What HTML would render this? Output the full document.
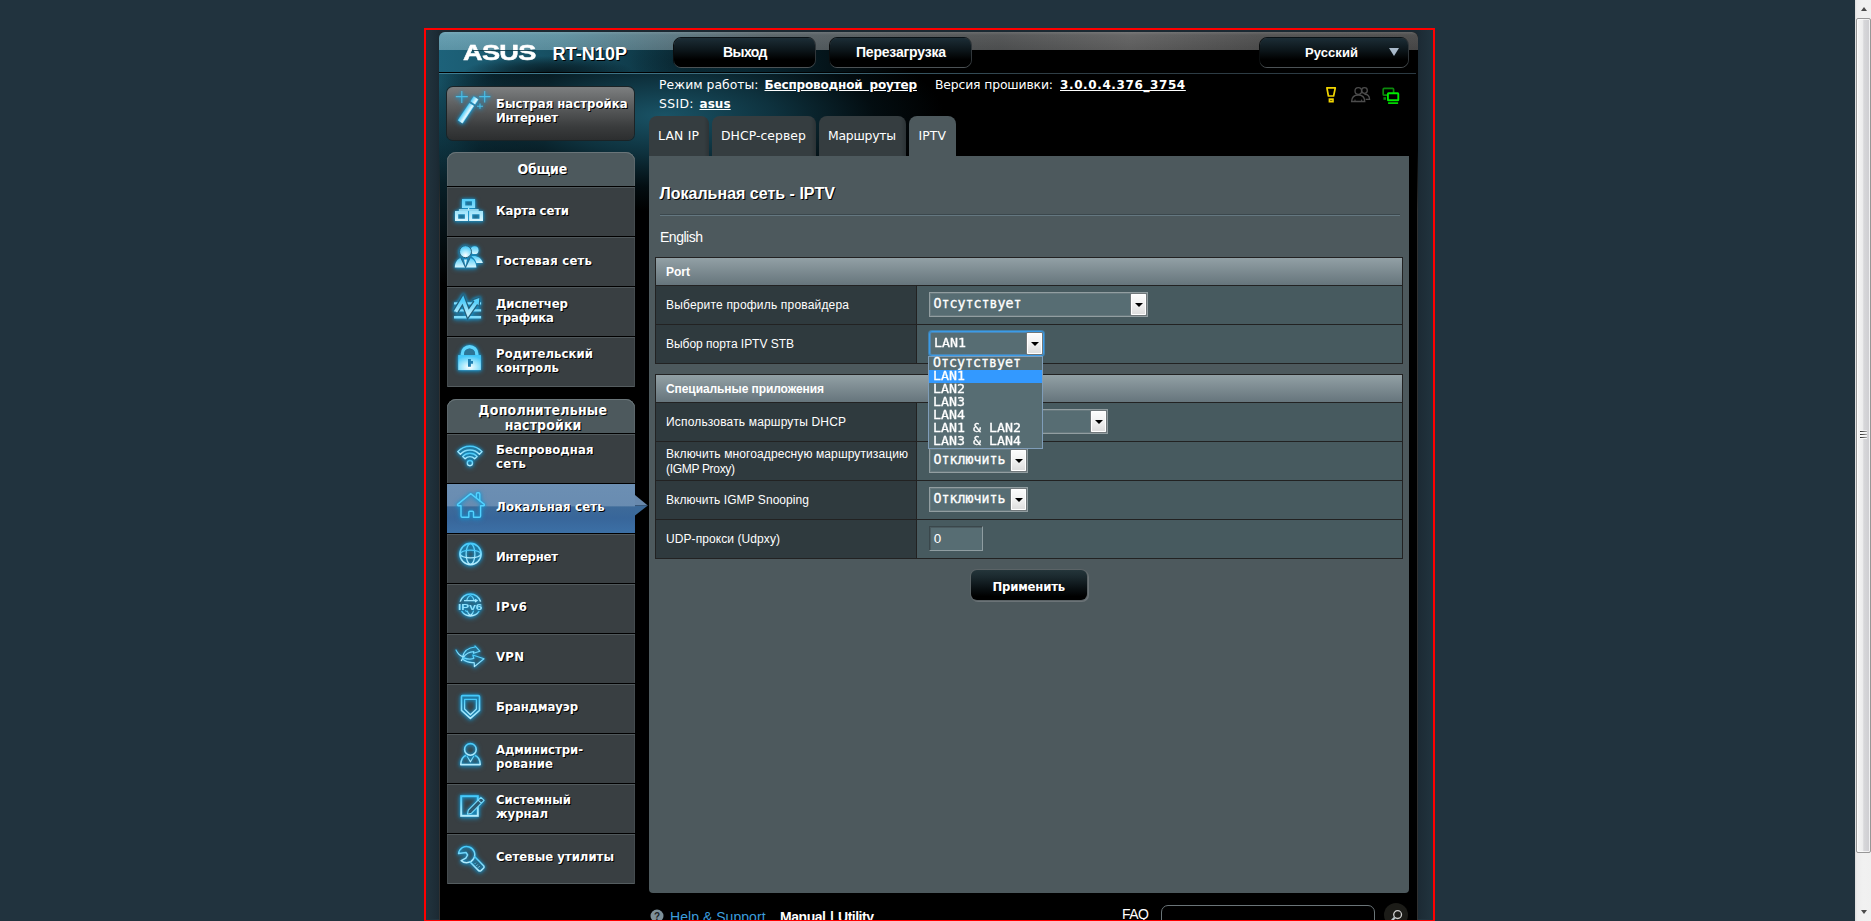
<!DOCTYPE html>
<html lang="ru">
<head>
<meta charset="utf-8">
<title>ASUS Wireless Router RT-N10P - IPTV</title>
<style>
html,body{margin:0;padding:0;}
body{width:1871px;height:921px;overflow:hidden;position:relative;background:#21333e;font-family:"Liberation Sans",sans-serif;color:#fff;}
.a{position:absolute;}
.t{position:absolute;white-space:pre;line-height:1;color:#fff;}
.sh{text-shadow:1px 1px 0 #000;}
u,.u{text-decoration:underline;}
/* outer */
#redbox{z-index:5;left:424px;top:28px;width:1007px;height:890px;border:2px solid #f00;}
#shadow{left:426px;top:30px;width:1007px;height:889px;background:linear-gradient(90deg,#21333e 0,#1f303a 5px,#1d2c36 10px,#1b2932 13px,#1b2932 991px,#1d2c36 995px,#1f303a 1001px,#21333e 1007px);}
#panel{left:439px;top:32px;width:979px;height:889px;background:#000;border-radius:6px 6px 0 0;overflow:hidden;}
#bg0{left:0;top:0;width:979px;height:40px;background:radial-gradient(ellipse 85px 16px at 110px 40px,rgba(2,10,14,.75) 0,rgba(2,10,14,.45) 50%,rgba(0,0,0,0) 100%),radial-gradient(ellipse 60px 30px at 250px 30px,rgba(2,10,14,.35) 0,rgba(0,0,0,0) 100%),linear-gradient(90deg,#1d627a 0,#185468 90px,#0f3b4a 200px,#07222c 330px,#000 470px);}
#bg1{left:0;top:42px;width:979px;height:260px;background:
 radial-gradient(ellipse 280px 95px at 225px 42px,rgba(27,88,108,.95) 0,rgba(19,68,85,.72) 40%,rgba(9,40,52,.32) 75%,rgba(0,0,0,0) 100%),
 radial-gradient(ellipse 110px 200px at 0px 10px,rgba(26,92,113,.95) 0,rgba(14,52,66,.6) 50%,rgba(0,0,0,0) 100%),
 #000;}
#topband{left:0;top:0;width:979px;height:18px;background:linear-gradient(90deg,rgba(112,168,186,.8) 0,rgba(110,160,175,.8) 120px,rgba(104,132,142,.82) 230px,rgba(98,106,110,.85) 330px,rgba(92,94,95,.85) 560px,rgba(112,112,112,.85) 690px,rgba(90,90,90,.85) 820px,rgba(84,84,84,.85) 100%);}
#hline{left:0;top:40px;width:977px;height:1px;background:#000;}
#hline2{left:0;top:41px;width:977px;height:1px;background:linear-gradient(90deg,#3f7d92 0,#3a6474 400px,#2f3e46 600px,#2b3a43 100%);}
.hbtn{height:29px;border-radius:7px;background:linear-gradient(180deg,#1c2d36 0,#0b1418 45%,#000 75%);box-shadow:0 1px 0 #4c5255,1px 0 0 #30363a,-1px 0 0 #0a0d0e,0 -1px 0 #0a1216;}
/* menu */
#quick{left:447px;top:87px;width:187px;height:53px;border-radius:6px;background:linear-gradient(180deg,#7d7f80 0,#5c5e5f 35%,#3a3c3d 75%,#2c2e2f 100%);box-shadow:0 0 0 1px #1b2326;}
.mhead{left:447px;width:188px;background:#4d595d;border-radius:9px 9px 0 0;box-shadow:inset 0 1px 0 #6a7579,inset 1px 0 0 #5c676b,inset -1px 0 0 #5c676b;}
.mi{left:447px;width:188px;height:49px;background:#393f42;border-top:1px solid #000;box-shadow:inset 0 1px 0 #50585b,inset 1px 0 0 #454c4f,inset -1px 0 0 #454c4f;}
.mi.cur{background:linear-gradient(180deg,#6c8fb3 0,#698cb1 44%,#3d6a99 47%,#38669a 70%,#3c70a6 100%);box-shadow:none;}
.mlast{box-shadow:inset 0 1px 0 #50585b,inset 1px 0 0 #454c4f,inset -1px 0 0 #454c4f,inset 0 -1px 0 #555d60;}
.ico{position:absolute;filter:drop-shadow(0 0 1.5px #1397d1) drop-shadow(0 1px 2px rgba(20,150,210,.8));}
/* tabs */
.tab{top:116px;height:40px;border-radius:8px 8px 0 0;background:linear-gradient(90deg,#353d40 0,#353d40 calc(100% - 5px),#2c3336 100%);}
.tab.on{background:#4d595d;}
#content{left:649px;top:156px;width:760px;height:737px;background:#4d595d;border-radius:0 0 4px 4px;}
/* tables */
.thd{left:655px;width:746px;height:27px;border:1px solid #222;background:linear-gradient(180deg,#92a0a5 0,#66757c 100%);}
.row{left:655px;width:746px;height:38px;border:1px solid #222;border-top:none;background:#475a5f;}
.row i{position:absolute;left:0;top:0;width:260px;height:38px;background:#2f3a3e;border-right:1px solid #222;}
.sel{height:23px;border:1px solid #929ea1;background:#576d73;box-shadow:inset 0 0 0 1px #67797e;}
.sel b{position:absolute;right:1px;top:1px;width:15px;height:21px;background:linear-gradient(180deg,#fdfdfd 0,#f1f1f1 50%,#dcdcdc 100%);border-radius:1px;box-shadow:inset 0 0 0 1px #fff,0 0 0 1px #70777a;}
.sel b:after{content:"";position:absolute;left:4px;top:9px;border:4px solid transparent;border-top:4px solid #000;border-bottom:none;}
.sel.focus{border-color:#3a9be8;border-radius:3px;box-shadow:0 0 0 1px rgba(60,160,235,.55),inset 0 0 0 1px #4e86b0;}
#list{left:928px;top:356px;width:113px;height:91px;border:1px solid #7f9db9;background:#576d73;}
#list div{height:13px;position:relative;}
#list .hi{background:#3399ff;}
#inp{left:929px;top:526px;width:52px;height:23px;background:#576d73;border:1px solid;border-color:#3a474b #8f9da1 #8f9da1 #3a474b;box-shadow:inset 1px 1px 0 #4a5a5f;}
#apply{left:971px;top:570px;width:116px;height:30px;border-radius:6px;background:linear-gradient(180deg,#24353a 0,#1a282d 25%,#0a1114 60%,#000 88%);box-shadow:0 0 0 1px #5b6366,1px 1px 0 1px #6b7377;}
/* scrollbar */
#sb{left:1855px;top:0;width:16px;height:921px;background:linear-gradient(90deg,#dcdcdc 0,#ececec 2px,#f1f1f1 50%,#f0f0f0 100%);}
#sbthumb{left:1px;top:18px;width:13px;height:833px;border:1px solid #979797;border-radius:2px;background:linear-gradient(90deg,#f6f6f6 0,#ececed 45%,#d7d7da 52%,#cdcdd1 100%);box-shadow:inset 0 0 0 1px rgba(255,255,255,.7);}
.tri-up{left:6px;top:7px;border:3.5px solid transparent;border-bottom:4px solid #4a4a4a;border-top:none;}
.tri-dn{left:6px;top:910px;border:3.5px solid transparent;border-top:4px solid #4a4a4a;border-bottom:none;}
.cap{display:inline-block;transform:scaleY(.87);transform-origin:0 84.6%;}
.mo{-webkit-text-stroke:.3px #fff;}
#pline{left:439px;top:150px;width:979px;height:771px;box-sizing:border-box;border-left:1px solid #303030;border-right:1px solid #303030;-webkit-mask-image:linear-gradient(180deg,transparent 0,#000 60px);mask-image:linear-gradient(180deg,transparent 0,#000 60px);}
#topband:after{content:"";position:absolute;left:0;top:0;width:100%;height:18px;background:linear-gradient(180deg,rgba(255,255,255,.16) 0,rgba(255,255,255,.05) 3px,rgba(0,0,0,.04) 100%);}

</style>
</head>
<body>
<div id="redbox" class="a"></div>
<div id="shadow" class="a"></div>
<div id="panel" class="a"><div id="bg0" class="a"></div><div id="bg1" class="a"></div><div id="topband" class="a"></div><div id="hline" class="a"></div><div id="hline2" class="a"></div></div>
<div id="pline" class="a"></div><span class="t" id="logo" style='left:463.2px;top:42.3px;font-family:"Liberation Sans",sans-serif;font-weight:bold;font-size:22px;letter-spacing:-.6px;transform:scaleX(1.235);transform-origin:0 0;-webkit-text-stroke:.5px #fff;'>ASUS</span><div class="a" style="left:472px;top:49.6px;width:64px;height:.9px;background:rgba(16,62,78,.85)"></div>
<span class="t" id="t0" style='left:552.5px;top:44.76px;font-family:"Liberation Sans",sans-serif;font-weight:bold;font-size:18px;letter-spacing:0.078px;text-shadow:1px 1px 0 #000;'>RT-N10P</span><div class="a hbtn" style="left:674px;top:38px;width:141px"></div><div class="a hbtn" style="left:830px;top:38px;width:141px"></div><div class="a hbtn" style="left:1260px;top:38px;width:148px"></div>
<span class="t" id="t1" style='left:723px;top:44.95px;font-family:"Liberation Sans",sans-serif;font-weight:bold;font-size:14px;letter-spacing:-0.566px;'>Выход</span><span class="t" id="t2" style='left:856px;top:44.95px;font-family:"Liberation Sans",sans-serif;font-weight:bold;font-size:14px;letter-spacing:-0.210px;'>Перезагрузка</span><span class="t" id="t3" style='left:1305px;top:46.20px;font-family:"Liberation Sans",sans-serif;font-weight:bold;font-size:13px;letter-spacing:0.078px;'>Русский</span><div class="a" style="left:1389px;top:48px;border:5.5px solid transparent;border-top:8px solid #a9bacb;border-bottom:none;"></div>
<span class="t" id="t4" style='left:659px;top:78.51px;font-family:"DejaVu Sans",sans-serif;font-weight:normal;font-size:12.4px;letter-spacing:0.004px;'>Режим работы:</span><span class="t" id="t5" style='left:764.5px;top:78.85px;font-family:"DejaVu Sans",sans-serif;font-weight:bold;font-size:12px;letter-spacing:-0.161px;word-spacing:3px;'><u>Беспроводной роутер</u></span><span class="t" id="t6" style='left:935px;top:78.51px;font-family:"DejaVu Sans",sans-serif;font-weight:normal;font-size:12.4px;letter-spacing:-0.147px;'>Версия прошивки:</span><span class="t" id="t7" style='left:1060px;top:78.85px;font-family:"DejaVu Sans",sans-serif;font-weight:bold;font-size:12px;letter-spacing:0.609px;'><u>3.0.0.4.376_3754</u></span><span class="t" id="t8" style='left:659px;top:97.51px;font-family:"DejaVu Sans",sans-serif;font-weight:normal;font-size:12.4px;letter-spacing:0.348px;'>SSID:</span><span class="t" id="t9" style='left:699.5px;top:97.85px;font-family:"DejaVu Sans",sans-serif;font-weight:bold;font-size:12px;letter-spacing:0.056px;'><u>asus</u></span>
<svg class="a" style="left:1316px;top:80px" width="96" height="32" viewBox="0 0 96 32"><path d="M10.9 7.9H19.3L17.6 16H12.4Z" fill="none" stroke="#f2d500" stroke-width="1.7" stroke-linejoin="round"/><rect x="12.6" y="18.3" width="5.2" height="4.2" fill="#f2d500"/><rect x="14.1" y="20" width="2.2" height=".8" fill="#5a4d00"/><g fill="none" stroke="#4c4c4c" stroke-width="1.3"><circle cx="48.5" cy="10.5" r="2.8"/><path d="M48.4 14.3C51.6 14 53.5 16 53.6 19.4H49.6"/><circle cx="42.3" cy="11" r="3.3" fill="#000"/><path d="M35.6 21.5C35.8 17 38.5 15 42.3 15C46.1 15 48.6 17 48.8 21.5Z" fill="#000"/><path d="M39 21.5V19.6M45.6 21.5V19.6" stroke-width="1"/></g><rect x="67.2" y="8.4" width="10.4" height="6.8" rx="1" fill="none" stroke="#0b8a0b" stroke-width="1.7"/><rect x="67.4" y="17.2" width="2.6" height="2.6" fill="#0b8a0b"/><rect x="71.9" y="13.3" width="10.4" height="7" rx=".6" fill="#000" stroke="#00ec00" stroke-width="1.9"/><rect x="72.1" y="22.3" width="10" height="1.6" fill="#00ec00"/></svg>
<div id="quick" class="a"></div><span class="t" id="t10" style='left:496px;top:97.00px;font-family:"DejaVu Sans Condensed","DejaVu Sans",sans-serif;font-weight:bold;font-size:13px;letter-spacing:0.028px;text-shadow:1px 1px 0 #000;'>Быстрая настройка</span><span class="t" id="t11" style='left:496px;top:111.00px;font-family:"DejaVu Sans Condensed","DejaVu Sans",sans-serif;font-weight:bold;font-size:13px;letter-spacing:-0.250px;text-shadow:1px 1px 0 #000;'>Интернет</span>
<div class="a mhead" style="top:152px;height:34px"></div><span class="t" id="t12" style='left:517.5px;top:161.96px;font-family:"DejaVu Sans Condensed","DejaVu Sans",sans-serif;font-weight:bold;font-size:14px;letter-spacing:-0.278px;text-shadow:1px 1px 0 #000;'>Общие</span><div class="a mi" style="top:186px;"></div><div class="a mi" style="top:236px;"></div><div class="a mi" style="top:286px;"></div><div class="a mi mlast" style="top:336px;height:50px;"></div><span class="t" id="t13" style='left:496px;top:204.00px;font-family:"DejaVu Sans Condensed","DejaVu Sans",sans-serif;font-weight:bold;font-size:13px;letter-spacing:-0.156px;text-shadow:1px 1px 0 #000;'>Карта сети</span><span class="t" id="t14" style='left:496px;top:254.00px;font-family:"DejaVu Sans Condensed","DejaVu Sans",sans-serif;font-weight:bold;font-size:13px;letter-spacing:0.246px;text-shadow:1px 1px 0 #000;'>Гостевая сеть</span><span class="t" id="t15" style='left:496px;top:297.00px;font-family:"DejaVu Sans Condensed","DejaVu Sans",sans-serif;font-weight:bold;font-size:13px;letter-spacing:-0.086px;text-shadow:1px 1px 0 #000;'>Диспетчер</span><span class="t" id="t16" style='left:496px;top:311.00px;font-family:"DejaVu Sans Condensed","DejaVu Sans",sans-serif;font-weight:bold;font-size:13px;letter-spacing:-0.112px;text-shadow:1px 1px 0 #000;'>трафика</span><span class="t" id="t17" style='left:496px;top:347.00px;font-family:"DejaVu Sans Condensed","DejaVu Sans",sans-serif;font-weight:bold;font-size:13px;letter-spacing:0.074px;text-shadow:1px 1px 0 #000;'>Родительский</span><span class="t" id="t18" style='left:496px;top:361.00px;font-family:"DejaVu Sans Condensed","DejaVu Sans",sans-serif;font-weight:bold;font-size:13px;letter-spacing:-0.031px;text-shadow:1px 1px 0 #000;'>контроль</span>
<div class="a mhead" style="top:399px;height:34px"></div><span class="t" id="t19" style='left:478.3px;top:402.66px;font-family:"DejaVu Sans Condensed","DejaVu Sans",sans-serif;font-weight:bold;font-size:14px;letter-spacing:0.233px;text-shadow:1px 1px 0 #000;'>Дополнительные</span><span class="t" id="t20" style='left:504.7px;top:417.86px;font-family:"DejaVu Sans Condensed","DejaVu Sans",sans-serif;font-weight:bold;font-size:14px;letter-spacing:0.107px;text-shadow:1px 1px 0 #000;'>настройки</span><div class="a mi" style="top:433px;"></div><div class="a mi cur" style="top:483px;"></div><div class="a mi" style="top:533px;"></div><div class="a mi" style="top:583px;"></div><div class="a mi" style="top:633px;"></div><div class="a mi" style="top:683px;"></div><div class="a mi" style="top:733px;"></div><div class="a mi" style="top:783px;"></div><div class="a mi mlast" style="top:833px;height:50px;"></div><svg class="a" style="left:635px;top:495px" width="14" height="21" viewBox="0 0 14 21"><path d="M0 0L12.8 10.5H0Z" fill="#6889ad"/><path d="M0 10.5H12.8L0 20.5Z" fill="#3c6a99"/></svg><span class="t" id="t21" style='left:496px;top:443.00px;font-family:"DejaVu Sans Condensed","DejaVu Sans",sans-serif;font-weight:bold;font-size:13px;letter-spacing:0.069px;text-shadow:1px 1px 0 #000;'>Беспроводная</span><span class="t" id="t22" style='left:496px;top:457.00px;font-family:"DejaVu Sans Condensed","DejaVu Sans",sans-serif;font-weight:bold;font-size:13px;letter-spacing:0.318px;text-shadow:1px 1px 0 #000;'>сеть</span><span class="t" id="t23" style='left:496px;top:500.00px;font-family:"DejaVu Sans Condensed","DejaVu Sans",sans-serif;font-weight:bold;font-size:13px;letter-spacing:0.197px;text-shadow:1px 1px 0 #000;'>Локальная сеть</span><span class="t" id="t24" style='left:496px;top:550.00px;font-family:"DejaVu Sans Condensed","DejaVu Sans",sans-serif;font-weight:bold;font-size:13px;letter-spacing:-0.250px;text-shadow:1px 1px 0 #000;'>Интернет</span><span class="t" id="t25" style='left:496px;top:600.00px;font-family:"DejaVu Sans Condensed","DejaVu Sans",sans-serif;font-weight:bold;font-size:13px;letter-spacing:0.771px;text-shadow:1px 1px 0 #000;'>IPv6</span><span class="t" id="t26" style='left:496px;top:650.00px;font-family:"DejaVu Sans Condensed","DejaVu Sans",sans-serif;font-weight:bold;font-size:13px;letter-spacing:0.289px;text-shadow:1px 1px 0 #000;'>VPN</span><span class="t" id="t27" style='left:496px;top:700.00px;font-family:"DejaVu Sans Condensed","DejaVu Sans",sans-serif;font-weight:bold;font-size:13px;letter-spacing:-0.120px;text-shadow:1px 1px 0 #000;'>Брандмауэр</span><span class="t" id="t28" style='left:496px;top:743.00px;font-family:"DejaVu Sans Condensed","DejaVu Sans",sans-serif;font-weight:bold;font-size:13px;letter-spacing:-0.067px;text-shadow:1px 1px 0 #000;'>Администри-</span><span class="t" id="t29" style='left:496px;top:757.00px;font-family:"DejaVu Sans Condensed","DejaVu Sans",sans-serif;font-weight:bold;font-size:13px;letter-spacing:0.180px;text-shadow:1px 1px 0 #000;'>рование</span><span class="t" id="t30" style='left:496px;top:793.00px;font-family:"DejaVu Sans Condensed","DejaVu Sans",sans-serif;font-weight:bold;font-size:13px;letter-spacing:0.020px;text-shadow:1px 1px 0 #000;'>Системный</span><span class="t" id="t31" style='left:496px;top:807.00px;font-family:"DejaVu Sans Condensed","DejaVu Sans",sans-serif;font-weight:bold;font-size:13px;letter-spacing:-0.037px;text-shadow:1px 1px 0 #000;'>журнал</span><span class="t" id="t32" style='left:496px;top:850.00px;font-family:"DejaVu Sans Condensed","DejaVu Sans",sans-serif;font-weight:bold;font-size:13px;letter-spacing:0.004px;text-shadow:1px 1px 0 #000;'>Сетевые утилиты</span>
<svg class="a" style="left:0;top:0" width="0" height="0"><defs><linearGradient id="gf" x1="0" y1="0" x2="0" y2="1"><stop offset="0" stop-color="#52cdf9"/><stop offset="1" stop-color="#d9f6fe"/></linearGradient><linearGradient id="gs" x1="0" y1="0" x2="0" y2="1"><stop offset="0" stop-color="#45c9fa"/><stop offset="1" stop-color="#b5ecfd"/></linearGradient><linearGradient id="gw" x1="0" y1="0" x2="1" y2="0"><stop offset="0" stop-color="#4ccbf8"/><stop offset=".75" stop-color="#e4f8fe"/><stop offset="1" stop-color="#8adffb"/></linearGradient><radialGradient id="gh" cx=".5" cy=".8" r=".75"><stop offset="0" stop-color="#fff"/><stop offset=".45" stop-color="#a9e9fd"/><stop offset="1" stop-color="#45c8f9"/></radialGradient></defs></svg><svg class="ico" style="left:448px;top:88px" width="48" height="48" viewBox="0 0 48 48"><g stroke="#4fc9f3" stroke-width="1.1" opacity=".85"><path d="M7.8 8.6H19.8M13.8 3.1V14.9M31.2 8.6H42.4M36.7 3.1V14.4"/><path d="M29 18.3H35M32 15.6V20.8" stroke-width="1.1"/></g><g transform="translate(28.1 9.9) rotate(33.5)"><rect x="-2.9" y="0" width="5.8" height="6" fill="url(#gw)"/><rect x="-2.9" y="7.9" width="5.8" height="20.9" fill="url(#gw)"/></g></svg><svg class="ico" style="left:448px;top:190px" width="48" height="48" viewBox="0 0 48 48"><path fill="url(#gf)" fill-rule="evenodd" d="M14 9.1H27.1V18H14Z M17.2 11.2V15.6H24V11.2Z M7 21.1H20.1V31H7Z M10.2 24.2V28.7H16.9V24.2Z M21.1 21.1H35V31H21.1Z M24.2 24.2V28.7H31.5V24.2Z"/><path fill="#b9eefd" d="M20 18H21.2V19.3H30.7V20.7H10.9V19.3H20Z"/></svg><svg class="ico" style="left:448px;top:240px" width="48" height="48" viewBox="0 0 48 48"><circle cx="26.6" cy="10.2" r="3.9" fill="url(#gf)"/><path fill="url(#gf)" d="M23.4 16.4C27.5 15.3 33 17 34.9 22.9H28.4C27.6 20 26 18.2 23.4 16.4Z"/><circle cx="17.5" cy="11.7" r="6" fill="url(#gh)" stroke="#2b5f78" stroke-width="1"/><path fill="url(#gf)" d="M6.8 27.6C7 22 9.5 19 12.6 17.9L17.5 27.4L22.4 17.9C25.5 19 28.2 22 28.4 27.6Z"/><path fill="none" stroke="#2b6f90" stroke-width="1.2" d="M12.9 17.6L17.5 27.4L22.1 17.6"/><path fill="#c9f1fd" d="M16 19.4H19L17.5 26.2Z"/></svg><svg class="ico" style="left:448px;top:290px" width="48" height="48" viewBox="0 0 48 48"><path fill="#7fdcfb" d="M6 12.2H33.1V14.6H6Z M6 19.3H33.1V21.4H6Z M6 26H33.1V28.6H6Z"/><path fill="none" stroke="#24607c" stroke-width="6.2" stroke-linejoin="miter" d="M7.6 21.6L14.9 9.5L20.2 23.6L29 11"/><path fill="#24607c" d="M32.6 6.2L23.6 9.6L31.6 17.2Z"/><path fill="none" stroke="url(#gs)" stroke-width="3.6" stroke-linejoin="miter" d="M7.6 21.6L14.9 9.5L20.2 23.6L29 11"/><path fill="#5ad2fb" d="M31.3 7.9L25.2 10.2L30.6 15.4Z"/></svg><svg class="ico" style="left:448px;top:340px" width="48" height="48" viewBox="0 0 48 48"><path fill="#5fd4fb" d="M12.7 15.6V13.9A8.9 8.9 0 0 1 30.5 13.9V15.6H27.1V13.9A5.5 5.5 0 0 0 16.1 13.9V15.6Z"/><path fill="#2d7597" d="M16.1 15.1V13.9A5.5 5.5 0 0 1 27.1 13.9V15.1Z"/><rect x="10.2" y="15.1" width="22.7" height="15" fill="url(#gh)"/><path fill="#1f7fb2" d="M20 19H22.9V21.1H25V23.7H22.9V26.8H20Z"/></svg><svg class="ico" style="left:448px;top:435px" width="48" height="48" viewBox="0 0 48 48"><g fill="none" stroke="url(#gs)" stroke-width="1.4" stroke-linejoin="round"><path d="M9.7 16.6A16.6 16.6 0 0 1 34.1 16.6L31.4 19.2A13 13 0 0 0 12.4 19.2Z"/><path d="M14.7 21.4A9.8 9.8 0 0 1 29.1 21.4L26.7 23.7A6.5 6.5 0 0 0 17.1 23.7Z"/><circle cx="21.9" cy="28.1" r="2.6"/></g></svg><svg class="ico" style="left:448px;top:485px" width="48" height="48" viewBox="0 0 48 48"><g fill="none" stroke="#52d2ff" stroke-width="1.4" stroke-linejoin="round" stroke-linecap="round"><path d="M22.7 8.6L9.6 19.4Q9.2 20.6 10.4 20.8H13V31Q13 32.3 14.3 32.3H20.8V27.3Q20.8 26.3 21.8 26.3H24.5Q25.5 26.3 25.5 27.3V32.3H31.3Q32.6 32.3 32.6 31V20.8H35.5Q36.8 20.6 36.3 19.4Z"/><path d="M28.4 13V9Q28.4 7.8 29.6 7.8H30.6Q31.8 7.8 31.8 9V15.8"/></g></svg><svg class="ico" style="left:448px;top:535px" width="48" height="48" viewBox="0 0 48 48"><g fill="none" stroke="url(#gs)" stroke-width="1.6"><circle cx="22.5" cy="19" r="10.6"/><ellipse cx="22.5" cy="19" rx="4.4" ry="10.4" stroke-width="1.3"/><ellipse cx="22.5" cy="19" rx="10.2" ry="3.9" stroke-width="1.3"/></g></svg><svg class="ico" style="left:448px;top:585px" width="48" height="48" viewBox="0 0 48 48"><g fill="none" stroke="url(#gs)" stroke-width="1.5"><path d="M12.2 16.6A10.6 10.6 0 0 1 32.6 16.6"/><path d="M13.6 26.2A10.6 10.6 0 0 0 31.2 26.2"/><path stroke-width="1.1" d="M18.6 16.2Q19.6 11.6 22.4 10.6Q25.2 11.6 26.2 16.2M16 15.6H28.6M27 14.2L29.2 15.6L27 17"/><path stroke-width="1.1" d="M19.2 25.6Q20.4 29.6 22.4 30.2Q24.4 29.6 25.6 25.6M17 25.4L19 26.4"/></g><text x="22.2" y="25" text-anchor="middle" font-family="Liberation Sans,sans-serif" font-weight="bold" font-size="9.6" textLength="24.6" lengthAdjust="spacingAndGlyphs" fill="#8fe1fc">IPv6</text></svg><svg class="ico" style="left:448px;top:635px" width="48" height="48" viewBox="0 0 48 48"><g fill="none" stroke="url(#gs)" stroke-width="1.2" stroke-linejoin="round" stroke-linecap="round"><path d="M8 15C10 19 12.5 21 14.8 21.8"/><path d="M14.5 22C16 15.5 21 12.5 27.2 12L27 10.8L31.8 16.2L25.5 18.3L25.8 16.6C21 16.8 17.5 19 15.2 22.6L13.4 25.6"/><path d="M15 22.6C19 24.2 22.5 24.6 25.8 23.4L24.8 20L36 23.8L26.4 31.6L26.2 27.5C22 28.2 18 26.8 14.4 24"/></g></svg><svg class="ico" style="left:448px;top:685px" width="48" height="48" viewBox="0 0 48 48"><g fill="none" stroke="url(#gs)" stroke-width="1.6" stroke-linejoin="round"><path d="M14.5 10.6H30.3Q31.5 10.6 31.5 11.8V25.4L22.4 33.4L13.5 25.4V11.8Q13.5 10.6 14.5 10.6Z"/><path stroke-width="1.3" d="M16.6 14.4H28.4V24L22.4 29.8L16.6 24Z"/></g></svg><svg class="ico" style="left:448px;top:735px" width="48" height="48" viewBox="0 0 48 48"><g fill="none" stroke="url(#gs)" stroke-width="1.6" stroke-linejoin="round"><circle cx="22.4" cy="14.4" r="5.8"/><path d="M18 20.2C15.5 21.2 13 24 12.8 29.6H32.2C32 24 29.5 21.2 26.8 20.2"/><path stroke-width="1.2" d="M18.8 20.8L22.4 26.8L26 20.8"/></g></svg><svg class="ico" style="left:448px;top:785px" width="48" height="48" viewBox="0 0 48 48"><rect x="13.2" y="11.2" width="16.6" height="19.6" fill="none" stroke="url(#gs)" stroke-width="2"/><path fill="#2c5b72" stroke="#7bdcfc" stroke-width="1.1" stroke-linejoin="round" d="M19.5 29.2L23.5 28.2L36.1 15.3L32.9 12.3L20.3 25.2Z M30.1 15.2L33.3 18.2"/></svg><svg class="ico" style="left:448px;top:835px" width="48" height="48" viewBox="0 0 48 48"><g fill="none" stroke="url(#gs)" stroke-width="1.5" stroke-linejoin="round" stroke-linecap="round"><path d="M10.6 18.6A8.1 8.1 0 1 1 13.2 25.6L17.8 23.2L19.6 20L18 17.4Z"/><path d="M26.8 21.8L35.6 30.8Q36.6 32 35.4 33.2L33 35.6Q31.6 36.6 30.4 35.4L21.8 26.8"/><path stroke-width="1" d="M27 28.6L27.6 28M28.8 30.4L29.4 29.8M30.6 32.2L31.2 31.6"/></g></svg>
<div class="a tab" style="left:649px;width:60px"></div><div class="a tab" style="left:712px;width:104px"></div><div class="a tab" style="left:819px;width:87px"></div><div class="a tab on" style="left:909px;width:47px"></div><span class="t" id="t33" style='left:658px;top:130.11px;font-family:"DejaVu Sans",sans-serif;font-weight:normal;font-size:12.4px;letter-spacing:0.200px;'>LAN IP</span><span class="t" id="t34" style='left:721px;top:130.11px;font-family:"DejaVu Sans",sans-serif;font-weight:normal;font-size:12.4px;letter-spacing:0.052px;'>DHCP-сервер</span><span class="t" id="t35" style='left:828px;top:130.11px;font-family:"DejaVu Sans",sans-serif;font-weight:normal;font-size:12.4px;letter-spacing:-0.241px;'>Маршруты</span><span class="t" id="t36" style='left:918.5px;top:130.11px;font-family:"DejaVu Sans",sans-serif;font-weight:normal;font-size:12.4px;letter-spacing:0.076px;'>IPTV</span>
<div id="content" class="a"></div>
<span class="t" id="t37" style='left:659.5px;top:186.46px;font-family:"Liberation Sans",sans-serif;font-weight:bold;font-size:16px;letter-spacing:0.010px;text-shadow:1px 1px 0 #000;'>Локальная сеть - IPTV</span><div class="a" style="left:660px;top:214px;width:740px;height:1px;background:#3b474c"></div><div class="a" style="left:660px;top:215px;width:740px;height:1px;background:#647780"></div><span class="t" id="t38" style='left:660px;top:229.55px;font-family:"Liberation Sans",sans-serif;font-weight:normal;font-size:14px;letter-spacing:-0.487px;'>English</span>
<div class="a thd" style="top:257px"></div><span class="t" id="t39" style='left:666px;top:265.84px;font-family:"Liberation Sans",sans-serif;font-weight:bold;font-size:12px;'>Port</span><div class="a row" style="top:286px"><i></i></div><div class="a row" style="top:325px"><i></i></div><span class="t" id="t40" style='left:666px;top:298.84px;font-family:"Liberation Sans",sans-serif;font-weight:normal;font-size:12px;letter-spacing:0.181px;'>Выберите профиль провайдера</span><span class="t" id="t41" style='left:666px;top:338.14px;font-family:"Liberation Sans",sans-serif;font-weight:normal;font-size:12px;letter-spacing:-0.025px;'>Выбор порта IPTV STB</span><div class="a thd" style="top:374px"></div><span class="t" id="t42" style='left:666px;top:383.14px;font-family:"Liberation Sans",sans-serif;font-weight:bold;font-size:12px;letter-spacing:-0.084px;'>Специальные приложения</span><div class="a row" style="top:403px"><i></i></div><div class="a row" style="top:442px"><i></i></div><div class="a row" style="top:481px"><i></i></div><div class="a row" style="top:520px"><i></i></div><span class="t" id="t43" style='left:666px;top:415.84px;font-family:"Liberation Sans",sans-serif;font-weight:normal;font-size:12px;letter-spacing:0.169px;'>Использовать маршруты DHCP</span><span class="t" id="t44" style='left:666px;top:447.84px;font-family:"Liberation Sans",sans-serif;font-weight:normal;font-size:12px;letter-spacing:0.108px;'>Включить многоадресную маршрутизацию</span><span class="t" id="t45" style='left:666px;top:462.64px;font-family:"Liberation Sans",sans-serif;font-weight:normal;font-size:12px;letter-spacing:-0.314px;'>(IGMP Proxy)</span><span class="t" id="t46" style='left:666px;top:493.84px;font-family:"Liberation Sans",sans-serif;font-weight:normal;font-size:12px;letter-spacing:0.063px;'>Включить IGMP Snooping</span><span class="t" id="t47" style='left:666px;top:532.84px;font-family:"Liberation Sans",sans-serif;font-weight:normal;font-size:12px;letter-spacing:0.082px;'>UDP-прокси (Udpxy)</span>
<div class="a sel" style="left:929px;top:292px;width:217px"><b></b></div><span class="t" id="t48" style='left:933.5px;top:296.75px;font-family:"DejaVu Sans Mono","Liberation Mono",monospace;font-weight:normal;font-size:13.3px;-webkit-text-stroke:.3px #fff;'>Отсутствует</span><div class="a sel" style="left:929px;top:409px;width:177px"><b></b></div><div class="a sel" style="left:929px;top:448px;width:97px"><b></b></div><span class="t" id="t49" style='left:933.5px;top:452.75px;font-family:"DejaVu Sans Mono","Liberation Mono",monospace;font-weight:normal;font-size:13.3px;-webkit-text-stroke:.3px #fff;'>Отключить</span><div class="a sel" style="left:929px;top:487px;width:97px"><b></b></div><span class="t" id="t50" style='left:933.5px;top:491.75px;font-family:"DejaVu Sans Mono","Liberation Mono",monospace;font-weight:normal;font-size:13.3px;-webkit-text-stroke:.3px #fff;'>Отключить</span><div id="inp" class="a"></div><span class="t" id="t51" style='left:933.5px;top:532.64px;font-family:"DejaVu Sans",sans-serif;font-weight:normal;font-size:12.6px;'>0</span><div class="a sel focus" style="left:929px;top:331px;width:113px"><b></b></div><span class="t" id="t52" style='left:934px;top:335.55px;font-family:"DejaVu Sans Mono","Liberation Mono",monospace;font-weight:normal;font-size:13.3px;-webkit-text-stroke:.3px #fff;'><span class=cap>LAN1</span></span><div id="list" class="a"><div><span class="t" style='left:4px;top:-1.5px;font-family:"DejaVu Sans Mono","Liberation Mono",monospace;font-size:13.3px;-webkit-text-stroke:.3px #fff;'>Отсутствует</span></div><div class=hi><span class="t" style='left:4px;top:-1.5px;font-family:"DejaVu Sans Mono","Liberation Mono",monospace;font-size:13.3px;-webkit-text-stroke:.3px #fff;'><span class=cap>LAN1</span></span></div><div><span class="t" style='left:4px;top:-1.5px;font-family:"DejaVu Sans Mono","Liberation Mono",monospace;font-size:13.3px;-webkit-text-stroke:.3px #fff;'><span class=cap>LAN2</span></span></div><div><span class="t" style='left:4px;top:-1.5px;font-family:"DejaVu Sans Mono","Liberation Mono",monospace;font-size:13.3px;-webkit-text-stroke:.3px #fff;'><span class=cap>LAN3</span></span></div><div><span class="t" style='left:4px;top:-1.5px;font-family:"DejaVu Sans Mono","Liberation Mono",monospace;font-size:13.3px;-webkit-text-stroke:.3px #fff;'><span class=cap>LAN4</span></span></div><div><span class="t" style='left:4px;top:-1.5px;font-family:"DejaVu Sans Mono","Liberation Mono",monospace;font-size:13.3px;-webkit-text-stroke:.3px #fff;'><span class=cap>LAN1 &amp; LAN2</span></span></div><div><span class="t" style='left:4px;top:-1.5px;font-family:"DejaVu Sans Mono","Liberation Mono",monospace;font-size:13.3px;-webkit-text-stroke:.3px #fff;'><span class=cap>LAN3 &amp; LAN4</span></span></div></div>
<div id="apply" class="a"></div><span class="t" id="t53" style='left:992.5px;top:579.50px;font-family:"DejaVu Sans Condensed","DejaVu Sans",sans-serif;font-weight:bold;font-size:13px;letter-spacing:-0.214px;text-shadow:1px 1px 0 #000;'>Применить</span>
<svg class="a" style="left:650px;top:909px" width="14" height="14"><circle cx="7" cy="7" r="6.5" fill="#7d9099"/><text x="7" y="11" font-family="Liberation Sans,sans-serif" font-weight="bold" font-size="10" text-anchor="middle" fill="#1b2326">?</text></svg><span class="t" id="t54" style='left:670px;top:909.65px;font-family:"Liberation Sans",sans-serif;font-weight:normal;font-size:14px;letter-spacing:0.044px;color:#3c9ddc;'><u>Help &amp; Support</u></span><span class="t" id="t55" style='left:780px;top:909.65px;font-family:"Liberation Sans",sans-serif;font-weight:bold;font-size:14px;letter-spacing:-0.447px;'>Manual</span><span class="t" id="t56" style='left:830px;top:909.65px;font-family:"Liberation Sans",sans-serif;font-weight:bold;font-size:14px;'>|</span><span class="t" id="t57" style='left:838px;top:909.65px;font-family:"Liberation Sans",sans-serif;font-weight:bold;font-size:14px;letter-spacing:-0.482px;'>Utility</span><span class="t" id="t58" style='left:1122px;top:906.65px;font-family:"Liberation Sans",sans-serif;font-weight:normal;font-size:14px;letter-spacing:-0.508px;'>FAQ</span><div class="a" style="left:1161px;top:905px;width:212px;height:24px;border:1px solid #6a7478;border-radius:7px;background:#000"></div><div class="a" style="left:1383.5px;top:903px;width:24px;height:24px;border-radius:12px;background:#1c1c18;"></div><svg class="a" style="left:1388px;top:908px" width="16" height="14"><circle cx="9.6" cy="6.6" r="3.9" fill="none" stroke="#cfcfcf" stroke-width="1.3"/><path d="M6.8 9.6 L3 13.5" stroke="#b8c4c8" stroke-width="2.2"/></svg>
<div id="sb" class="a"><div class="a tri-up"></div><div id="sbthumb" class="a"></div><div class="a tri-dn"></div></div><div class="a" style="left:1860px;top:431px;width:7px;height:1px;background:linear-gradient(90deg,#2c2c2c 0,#555 40%,#a8a8a8 100%);box-shadow:0 1px 0 rgba(255,255,255,.8),0 -1px 0 rgba(255,255,255,.5)"></div><div class="a" style="left:1860px;top:434px;width:7px;height:1px;background:linear-gradient(90deg,#2c2c2c 0,#555 40%,#a8a8a8 100%);box-shadow:0 1px 0 rgba(255,255,255,.8),0 -1px 0 rgba(255,255,255,.5)"></div><div class="a" style="left:1860px;top:437px;width:7px;height:1px;background:linear-gradient(90deg,#2c2c2c 0,#555 40%,#a8a8a8 100%);box-shadow:0 1px 0 rgba(255,255,255,.8),0 -1px 0 rgba(255,255,255,.5)"></div>
</body>
</html>
